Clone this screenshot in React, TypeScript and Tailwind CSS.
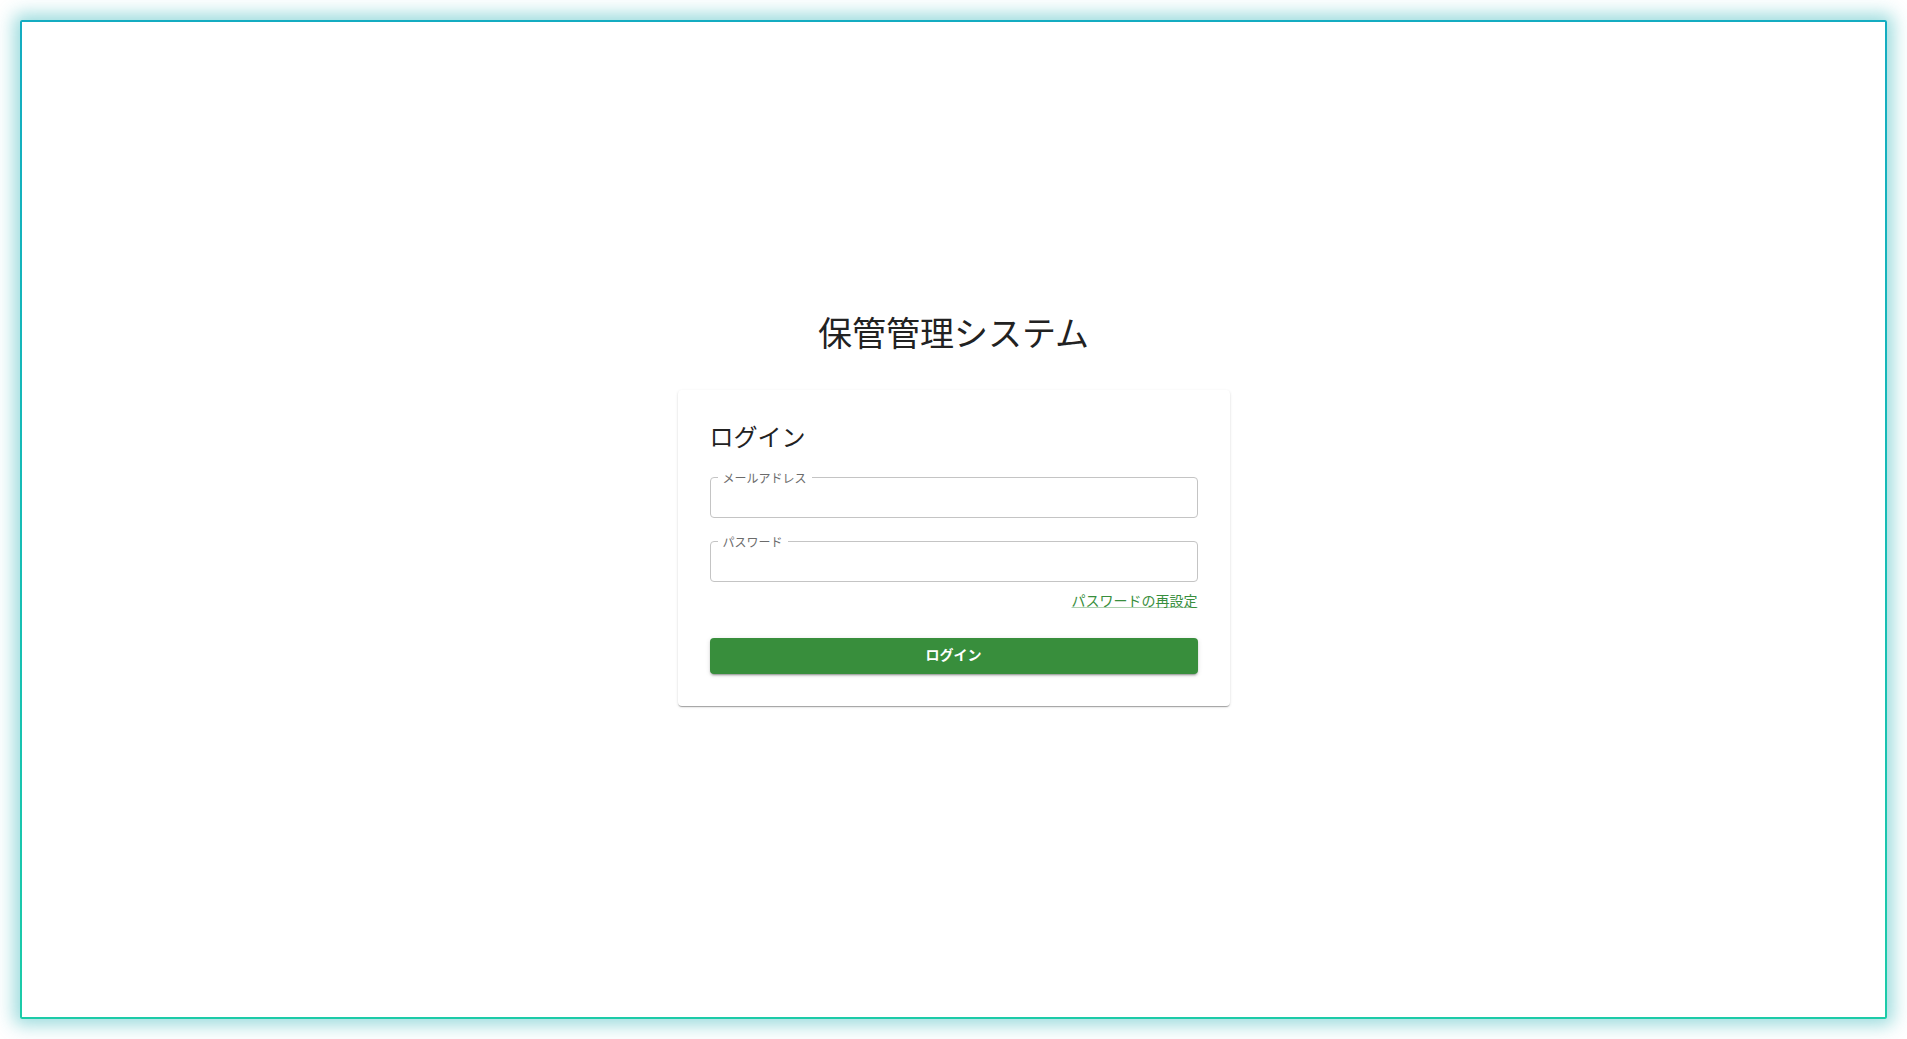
import { useState } from "react";

const jp = "font-['Noto_Sans_CJK_JP','Noto_Sans',sans-serif]";

function OutlinedField({
  label,
  type,
  value,
  onChange,
}: {
  label: string;
  type: string;
  value: string;
  onChange: (v: string) => void;
}) {
  return (
    <fieldset className="m-0 rounded-[4px] border border-[#c4c4c4] p-0 hover:border-[#222]">
      <legend className="ml-[7px] px-[5px] text-[12px] leading-[12px] text-[#6b6b6b]">
        {label}
      </legend>
      <input
        type={type}
        value={value}
        onChange={(e) => onChange(e.target.value)}
        className="block h-[33px] w-full bg-transparent px-[14px] pb-[6px] text-base text-[#222] outline-none"
      />
    </fieldset>
  );
}

export default function App() {
  const [email, setEmail] = useState("");
  const [password, setPassword] = useState("");

  return (
    <div className={`h-screen w-full bg-white p-5 ${jp}`}>
      {/* gradient frame */}
      <div className="h-full rounded-[2px] bg-gradient-to-b from-[#14acc1] to-[#1ccba8] p-[2px] shadow-[0_0_18px_6px_rgba(30,175,180,0.45)]">
        <div className="flex h-full flex-col items-center justify-center bg-white pb-[23px]">
          <h1 className="mb-[37px] text-[34px] leading-[42px] font-normal text-[#222]">
            保管管理システム
          </h1>

          <div className="w-[552px] rounded-[4px] bg-white p-8 shadow-[0_2px_1px_-1px_rgba(0,0,0,0.2),0_1px_1px_0_rgba(0,0,0,0.14),0_1px_3px_0_rgba(0,0,0,0.12)]">
            <h2 className="text-[24px] leading-[28px] font-normal text-[#222]">ログイン</h2>

            <form
              className="flex flex-col"
              onSubmit={(e) => {
                e.preventDefault();
              }}
            >
              <div className="mt-[22px]">
                <OutlinedField label="メールアドレス" type="email" value={email} onChange={setEmail} />
              </div>
              <div className="mt-[18px]">
                <OutlinedField label="パスワード" type="password" value={password} onChange={setPassword} />
              </div>

              <div className="mt-[8px] flex justify-end">
                <a
                  href="#"
                  className="text-[14px] leading-[20px] text-[#388e3c] underline decoration-[rgba(56,142,60,0.4)] hover:decoration-[#388e3c]"
                >
                  パスワードの再設定
                </a>
              </div>

              <button
                type="submit"
                className="mt-[28px] h-9 w-full rounded-[4px] bg-[#388e3c] pb-[2px] text-[14px] font-bold text-white shadow-[0_3px_1px_-2px_rgba(0,0,0,0.2),0_2px_2px_0_rgba(0,0,0,0.14),0_1px_5px_0_rgba(0,0,0,0.12)] hover:bg-[#2e7d32]"
              >
                ログイン
              </button>
            </form>
          </div>
        </div>
      </div>
    </div>
  );
}
